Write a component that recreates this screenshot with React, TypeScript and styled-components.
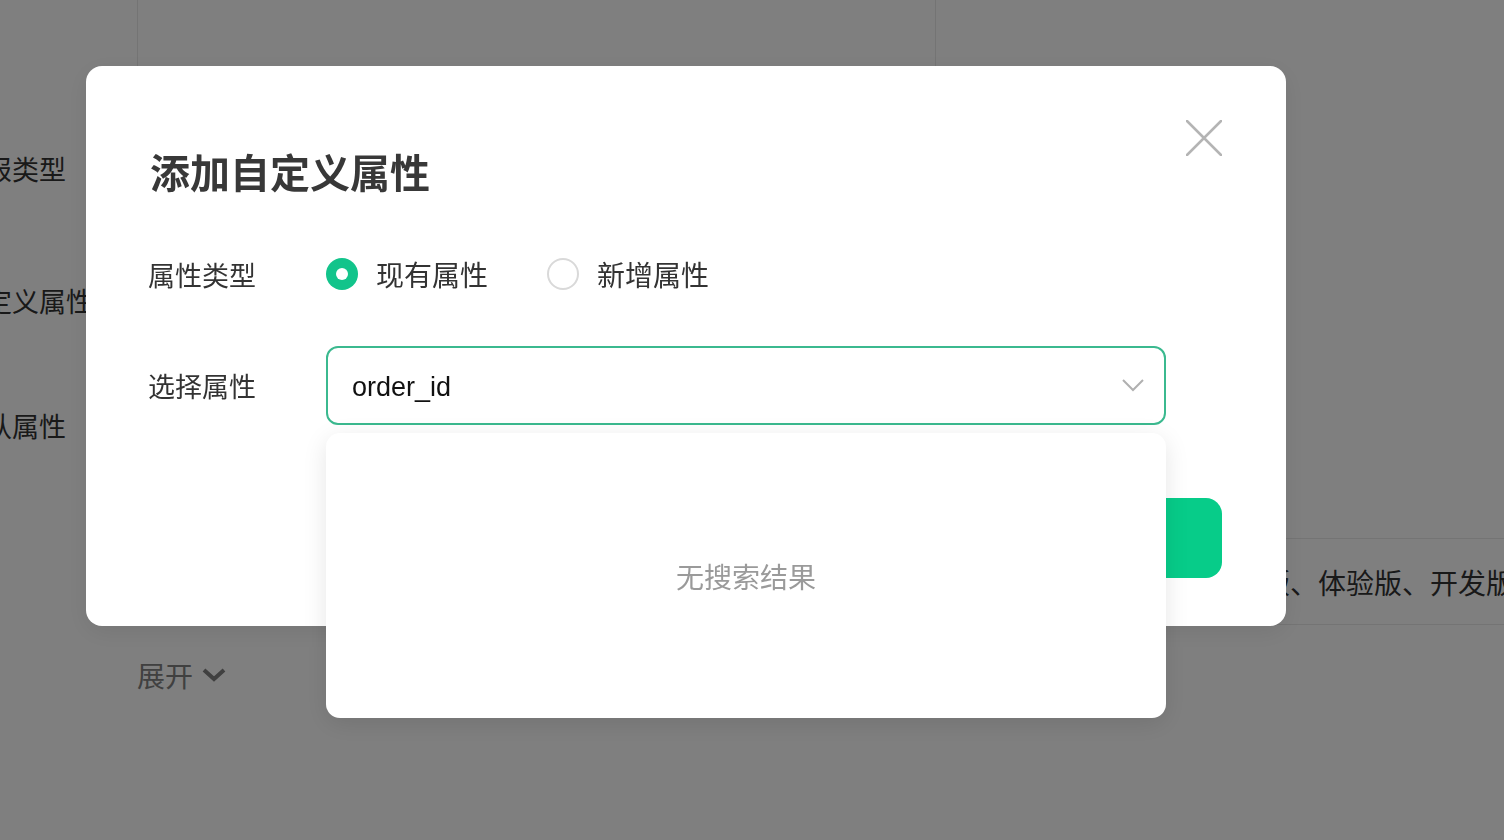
import React, { useState } from 'react'
import styled, { createGlobalStyle } from 'styled-components'

const GlobalStyle = createGlobalStyle`
	html, body {
		margin: 0;
		height: 100%;
		overflow: hidden;
		background: #fff;
	}
	body {
		font-family: "Liberation Sans", "Noto Sans CJK SC", sans-serif;
		color: #333;
	}
	* {
		box-sizing: border-box;
	}
`

/* ---------- page behind the dialog (scrolled to the right) ---------- */

const Page = styled.div`
	width: 1546px;
	margin-left: -42px;
`

const TopTable = styled.div`
	height: 102px;
	margin-left: 179px;
	display: grid;
	grid-template-columns: 798px 1fr;
	border-left: 1px solid #e8e8e8;

	div:first-child {
		border-right: 1px solid #e8e8e8;
	}
`

const FieldRow = styled.div<{ $h: number }>`
	height: ${p => p.$h}px;
	display: grid;
	grid-template-columns: 179px 1fr;
	align-items: center;
`

const FieldLabel = styled.span`
	font-size: 27px;
	color: #333;
	white-space: nowrap;
`

const VersionRow = styled.div`
	margin: 54px 0 0 179px;
	height: 87px;
	display: grid;
	grid-template-columns: 1069px 1fr;
	align-items: center;
	border-top: 1px solid #e8e8e8;
	border-bottom: 1px solid #e8e8e8;
	font-size: 28px;
	color: #333;
	white-space: nowrap;
`

const Expand = styled.div`
	margin-left: 179px;
	height: 100px;
	display: flex;
	align-items: center;
	gap: 8px;
	font-size: 28px;
	color: #808080;
`

/* ---------- dialog ---------- */

const Overlay = styled.div`
	position: fixed;
	inset: 0;
	background: rgba(0, 0, 0, 0.5);
	padding: 66px 0 0 86px;
`

const Modal = styled.div`
	width: 1200px;
	background: #fff;
	border-radius: 16px;
	padding: 54px 64px 48px;
	box-shadow: 0 6px 24px rgba(0, 0, 0, 0.08);
`

const Header = styled.div`
	display: flex;
	justify-content: space-between;
	align-items: flex-start;
`

const Title = styled.h2`
	margin: 23px 0 0;
	font-family: "Noto Sans CJK SC", sans-serif;
	font-size: 40px;
	line-height: 56px;
	font-weight: 700;
	color: #383838;
`

const CloseButton = styled.button`
	width: 36px;
	height: 36px;
	padding: 0;
	border: 0;
	background: none;
	cursor: pointer;
	display: block;
`

const Form = styled.div`
	margin-top: 43px;
	display: flex;
	flex-direction: column;
	gap: 40px;
`

const FormRow = styled.div<{ $h: number }>`
	height: ${p => p.$h}px;
	display: grid;
	grid-template-columns: 176px 1fr;
	align-items: center;
`

const Label = styled.span`
	margin-left: -2px;
	font-family: "Noto Sans CJK SC", sans-serif;
	font-size: 27px;
	color: #333;
`

const RadioGroup = styled.div`
	display: flex;
	align-items: center;
	gap: 59px;
`

const Option = styled.label`
	display: flex;
	align-items: center;
	gap: 18px;
	font-family: "Noto Sans CJK SC", sans-serif;
	font-size: 28px;
	color: #333;
	cursor: pointer;
`

const RadioDot = styled.span<{ $checked: boolean }>`
	width: 32px;
	height: 32px;
	border-radius: 50%;
	display: flex;
	align-items: center;
	justify-content: center;
	background: ${p => (p.$checked ? '#12c48b' : '#fff')};
	border: ${p => (p.$checked ? 'none' : '2px solid #d9d9d9')};

	&::after {
		content: '';
		display: ${p => (p.$checked ? 'block' : 'none')};
		width: 12px;
		height: 12px;
		border-radius: 50%;
		background: #fff;
	}
`

const Select = styled.div`
	position: relative;
	width: 840px;
	height: 79px;
	border: 2px solid #3bb98f;
	border-radius: 12px;
	padding: 3px 20px 0 24px;
	display: flex;
	align-items: center;
	justify-content: space-between;
	font-size: 27px;
	color: #111;

	svg {
		margin-top: -3px;
	}
`

const Dropdown = styled.div`
	position: absolute;
	left: -2px;
	right: -2px;
	top: calc(100% + 10px);
	height: 285px;
	background: #fff;
	border-radius: 14px;
	box-shadow: 0 6px 24px rgba(0, 0, 0, 0.1);
	display: flex;
	align-items: center;
	justify-content: center;
	font-family: "Noto Sans CJK SC", sans-serif;
	font-size: 28px;
	color: #9a9a9a;
	z-index: 2;
`

const Footer = styled.div`
	margin-top: 73px;
	display: flex;
	justify-content: flex-end;
	gap: 24px;
`

const Button = styled.button<{ $primary?: boolean }>`
	width: 180px;
	height: 80px;
	border-radius: 16px;
	font-family: "Noto Sans CJK SC", sans-serif;
	font-size: 28px;
	border: ${p => (p.$primary ? 'none' : '2px solid #e0e0e0')};
	background: ${p => (p.$primary ? '#07cc89' : '#fff')};
	color: ${p => (p.$primary ? '#fff' : '#333')};
`

function Radio({ checked, label, onSelect }) {
	return (
		<Option onClick={onSelect}>
			<RadioDot $checked={checked} />
			{label}
		</Option>
	)
}

export default function App() {
	const [kind, setKind] = useState('existing')

	return (
		<>
			<GlobalStyle />
			<Page>
				<TopTable>
					<div />
					<div />
				</TopTable>
				<FieldRow $h={132}>
					<FieldLabel>上报类型</FieldLabel>
				</FieldRow>
				<FieldRow $h={132}>
					<FieldLabel>自定义属性</FieldLabel>
				</FieldRow>
				<FieldRow $h={118}>
					<FieldLabel>默认属性</FieldLabel>
				</FieldRow>
				<VersionRow>
					<span />
					<span>正式版、体验版、开发版</span>
				</VersionRow>
				<Expand>
					展开
					<svg width="26" height="16" viewBox="0 0 26 16">
						<polyline
							points="3,3 13,12 23,3"
							fill="none"
							stroke="#808080"
							strokeWidth="4"
						/>
					</svg>
				</Expand>
			</Page>

			<Overlay>
				<Modal>
					<Header>
						<Title>添加自定义属性</Title>
						<CloseButton aria-label="关闭">
							<svg width="36" height="36" viewBox="0 0 36 36">
								<path
									d="M1 1 L35 35 M35 1 L1 35"
									stroke="#b4b4b4"
									strokeWidth="2.5"
									strokeLinecap="round"
								/>
							</svg>
						</CloseButton>
					</Header>

					<Form>
						<FormRow $h={64}>
							<Label>属性类型</Label>
							<RadioGroup>
								<Radio
									checked={kind === 'existing'}
									label="现有属性"
									onSelect={() => setKind('existing')}
								/>
								<Radio
									checked={kind === 'new'}
									label="新增属性"
									onSelect={() => setKind('new')}
								/>
							</RadioGroup>
						</FormRow>
						<FormRow $h={79}>
							<Label>选择属性</Label>
							<Select>
								order_id
								<svg width="22" height="13" viewBox="0 0 22 13">
									<polyline
										points="1,1 11,11 21,1"
										fill="none"
										stroke="#b0b0b0"
										strokeWidth="2"
									/>
								</svg>
								<Dropdown>无搜索结果</Dropdown>
							</Select>
						</FormRow>
					</Form>

					<Footer>
						<Button>取消</Button>
						<Button $primary>确定</Button>
					</Footer>
				</Modal>
			</Overlay>
		</>
	)
}
